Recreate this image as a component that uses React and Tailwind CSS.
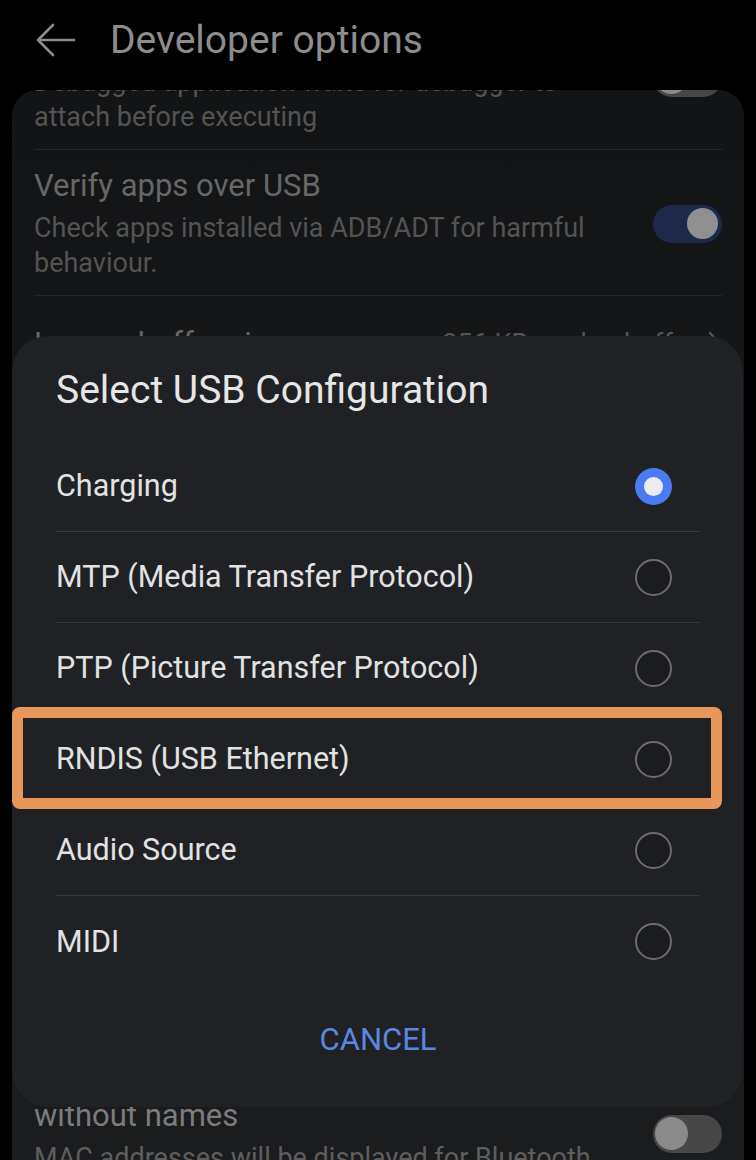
import React from 'react';

const options = [
    { label: 'Charging', selected: true },
    { label: 'MTP (Media Transfer Protocol)' },
    { label: 'PTP (Picture Transfer Protocol)' },
    { label: 'RNDIS (USB Ethernet)' },
    { label: 'Audio Source' },
    { label: 'MIDI' },
];

const Toggle = ({ on }) => (
    <div className={`w-[69px] h-[38px] rounded-full flex items-center shrink-0 ${on ? 'bg-[#1b2a4b] justify-end pr-[4px]' : 'bg-[#474747] justify-start pl-[2px]'}`}>
        <div className={`rounded-full ${on ? 'w-[31px] h-[31px] bg-[#8f8f8f]' : 'w-[33px] h-[33px] bg-[#8a8a8a]'}`} />
    </div>
);

// rows scrolled above the header keep their title area, just without the text
const SettingRow = ({ title, subtitle, on, last, bright }) => (
    <div className={`flex items-center gap-[40px] pt-[16px] pb-[14px] ${last ? '' : 'border-b border-[#25272a]'}`}>
        <div className={`flex-1 ${title ? '' : 'pt-[45px]'}`}>
            {title && <p className={`text-[31px] leading-[40px] ${bright ? 'text-[#7c7c7c]' : 'text-[#676767]'}`}>{title}</p>}
            {subtitle && (
                <p className={`text-[27px] leading-[35px] ${title ? 'mt-[5px]' : ''} ${bright ? 'text-[#5e5e5e]' : 'text-[#545454]'}`}>{subtitle}</p>
            )}
        </div>
        <Toggle on={on} />
    </div>
);

const Radio = ({ selected }) =>
    selected ? (
        <div className="w-[37px] h-[37px] rounded-full bg-[#4a7bf0] flex items-center justify-center">
            <div className="w-[19px] h-[19px] rounded-full bg-[#ececf0]" />
        </div>
    ) : (
        <div className="w-[37px] h-[37px] rounded-full border-2 border-[#6c6c6c] bg-[#1b1c1f]" />
    );

const App = () => {
    return (
        <div className="relative w-[756px] h-[1160px] overflow-hidden bg-black font-['Roboto','Liberation_Sans',sans-serif]">
            {/* Header */}
            <div className="h-[90px] pb-[10px] flex items-center pl-[36px]">
                <svg width="40" height="34" viewBox="0 0 40 34" fill="none" stroke="#8c8c8c" strokeWidth="2.6" strokeLinecap="round" strokeLinejoin="round">
                    <path d="M38 17H3" />
                    <path d="M17 2L2 17l15 15" />
                </svg>
                <h1 className="ml-[34px] text-[39px] leading-[46px] text-[#8d8d8d]">Developer options</h1>
            </div>

            {/* Settings list (dimmed behind dialog) */}
            <div className="mx-[12px] h-[1070px] rounded-t-[26px] overflow-hidden bg-linear-to-b from-[#131416] to-[#1b1c1e]">
                <div className="-mt-[86px] px-[22px]">
                    <SettingRow subtitle="Debugged application waits for debugger to attach before executing" />
                    <SettingRow
                        title="Verify apps over USB"
                        subtitle="Check apps installed via ADB/ADT for harmful behaviour."
                        on
                    />
                    <div className="h-[91px] pt-[6px] flex items-center border-b border-[#25272a]">
                        <p className="flex-1 text-[31px] text-[#676767]">Logger buffer sizes</p>
                        <p className="text-[27px] text-[#545454]">256 KB per log buffer</p>
                        <svg className="ml-[12px]" width="14" height="26" viewBox="0 0 14 26" fill="none" stroke="#545454" strokeWidth="2.4" strokeLinecap="round" strokeLinejoin="round">
                            <path d="M2 2l10 11L2 24" />
                        </svg>
                    </div>
                    {/* rows hidden by the dialog */}
                    <div className="h-[653px]" />
                    <SettingRow
                        title={<>Show Bluetooth devices<br />without names</>}
                        subtitle="MAC addresses will be displayed for Bluetooth devices without names"
                        bright
                        last
                    />
                </div>
            </div>

            {/* Dialog */}
            <div className="absolute left-[12px] top-[336px] w-[731px] h-[771px] rounded-[36px] bg-[#1f2124] pl-[44px] pr-[43px] flex flex-col">
                <h2 className="h-[105px] pt-[31px] text-[39px] leading-[46px] text-[#e6e6e6]">Select USB Configuration</h2>
                <div>
                    {options.map((o, i) => (
                        <div
                            key={o.label}
                            className={`h-[91px] flex items-center pr-[28px] ${i < options.length - 1 ? 'border-b border-[#36383c]' : ''}`}
                        >
                            <span className="flex-1 text-[30.5px] text-[#e2e2e2]">{o.label}</span>
                            <Radio selected={o.selected} />
                        </div>
                    ))}
                </div>
                <button className="mt-[33px] self-center text-[31px] leading-[40px] text-[#5b87e2] uppercase">Cancel</button>
            </div>

            {/* Highlight */}
            <div className="absolute left-[12px] top-[707px] w-[710px] h-[102px] border-[11px] border-[#e8975a] rounded-[8px]" />
        </div>
    );
};

export default App;
